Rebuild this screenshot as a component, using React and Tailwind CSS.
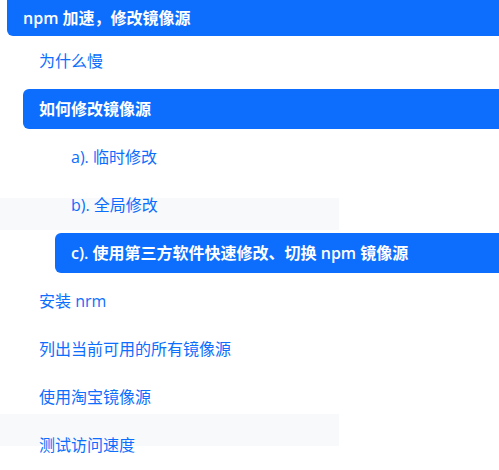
const items = [
  { label: '为什么慢', level: 1 },
  { label: '如何修改镜像源', level: 1, active: true },
  { label: 'a). 临时修改', level: 2 },
  { label: 'b). 全局修改', level: 2 },
  { label: 'c). 使用第三方软件快速修改、切换 npm 镜像源', level: 2, active: true },
  { label: '安装 nrm', level: 1 },
  { label: '列出当前可用的所有镜像源', level: 1 },
  { label: '使用淘宝镜像源', level: 1 },
  { label: '测试访问速度', level: 1 },
];

const indent = { 1: 'ml-[23px]', 2: 'ml-[55px]' };

export default function App() {
  return (
    <div
      className="relative w-[499px] h-[470px] overflow-hidden bg-white text-[16px]"
      style={{ fontFamily: '"Open Sans", "Noto Sans CJK SC", sans-serif' }}
    >
      {/* hover bands */}
      <div className="absolute left-0 top-[198px] w-[339px] h-[32px] bg-[#f8f9fa]" />
      <div className="absolute left-0 top-[414px] w-[339px] h-[32px] bg-[#f8f9fa]" />

      <div className="relative flex flex-col">
        <div className="ml-[7px] h-9 mb-[5px] flex items-center pl-4 bg-[#0d6efd] text-white font-semibold rounded-bl-md whitespace-nowrap">
          npm 加速，修改镜像源
        </div>
        <ul className="flex flex-col gap-2">
          {items.map((it) => (
            <li
              key={it.label}
              className={`${indent[it.level]} h-10 flex items-center pl-4 whitespace-nowrap ${
                it.active
                  ? 'bg-[#0d6efd] text-white font-semibold rounded-l-md'
                  : 'text-[#0d6efd]'
              }`}
            >
              {it.label}
            </li>
          ))}
        </ul>
      </div>
    </div>
  );
}
